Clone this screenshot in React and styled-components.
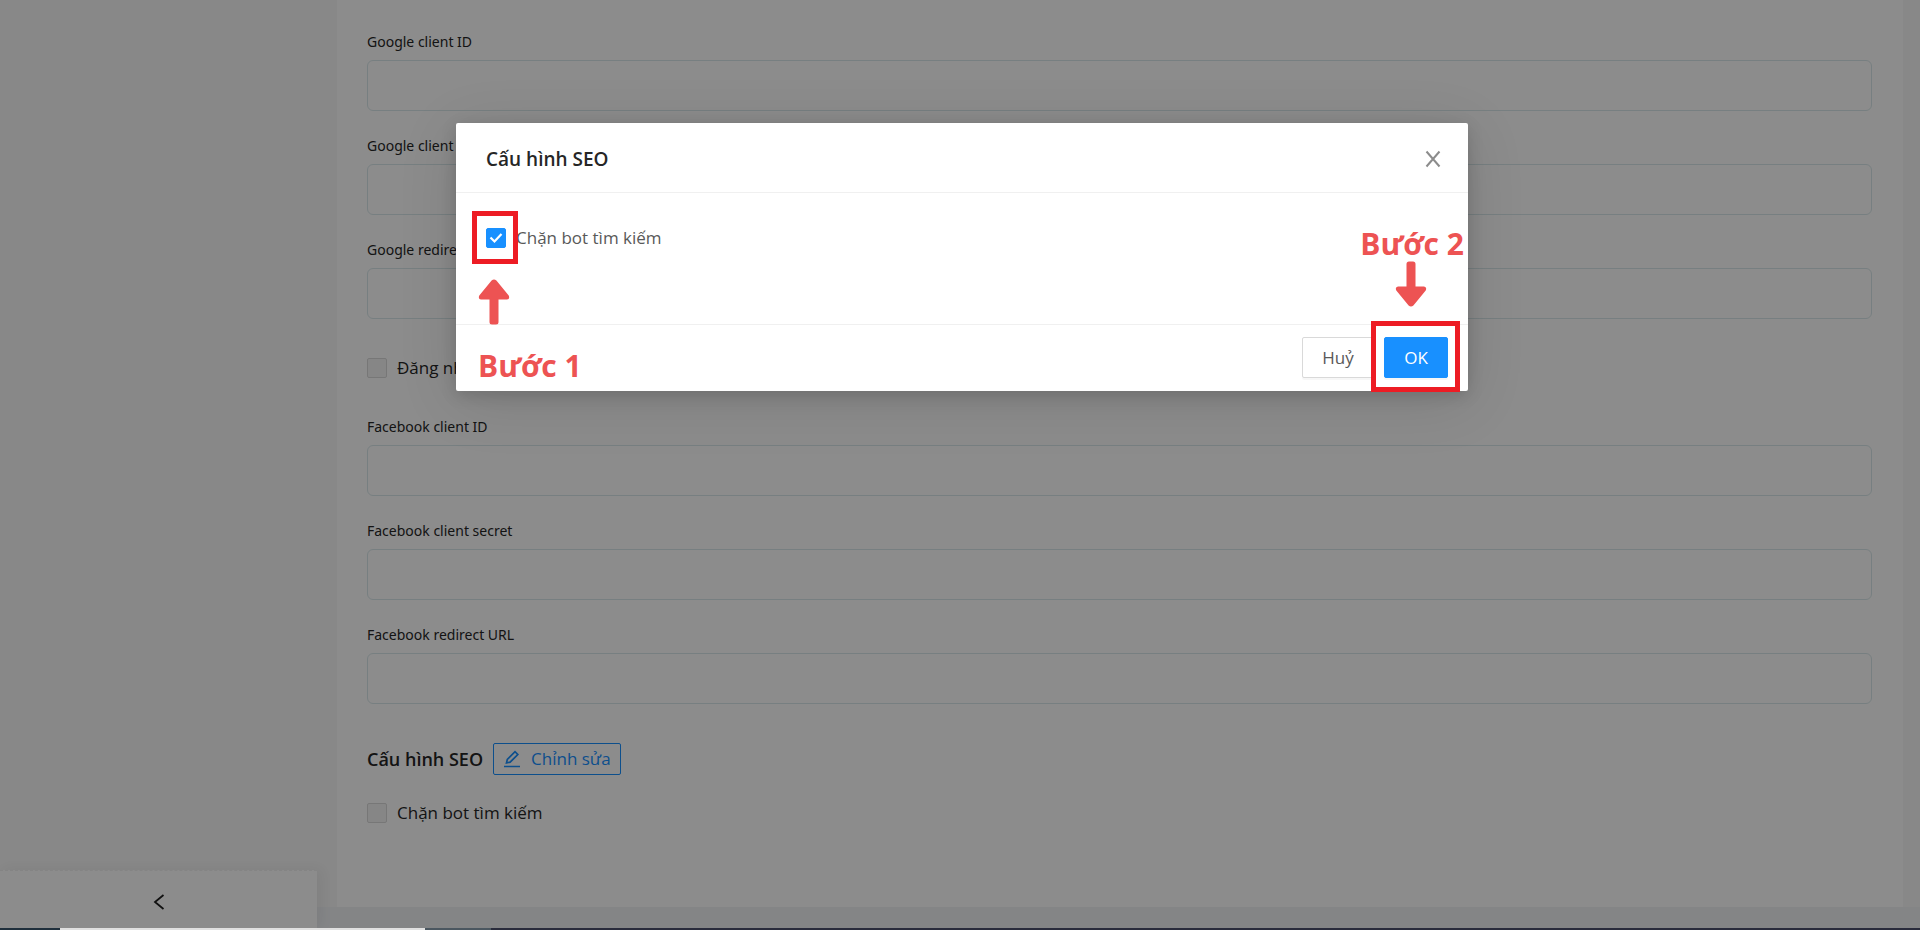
import React from "react";
import styled, { createGlobalStyle } from "styled-components";

const Global = createGlobalStyle`
  * { box-sizing: border-box; }
  body { margin: 0; background: #f0f2f5; color: #262626; font-family: "Open Sans", "Noto Sans", sans-serif; font-size: 17px; line-height: 28px; }
  button, input { font: inherit; }
`;
const Page = styled.div`position: relative; display: flex; flex-direction: column; min-height: 100vh;`;
const Body = styled.div`display: flex; flex: 1;`;
const Sidebar = styled.aside`position: relative; display: flex; flex-direction: column; justify-content: flex-end; width: 317px; flex: none; background: #f7f7f7;`;
const Collapse = styled.button`display: grid; place-items: center; height: 58px; padding: 4px 0 0; border: 0; border-top: 1px dashed #f0f0f0; background: #fff; box-shadow: 4px 0 12px rgba(0,0,0,.06);`;
const Main = styled.main`flex: 1; display: flex; flex-direction: column; min-width: 0; padding-bottom: 21px;`;
const Gutter = styled.div`flex: 1; padding: 0 17px 0 20px; background: #f7f7f7;`;
const Card = styled.form`height: 100%; padding: 28px 31px 60px 30px; background: #fff;`;
const Field = styled.label`display: block; margin-bottom: 21px; font-family: "Noto Sans", sans-serif; font-size: 14px; line-height: 28px;`;
const TextBox = styled.input`display: block; width: 100%; height: 51px; margin-top: 4px; border: 1px solid #d9e8eb; border-radius: 6px; background: #fff; outline: none;`;
const CheckRow = styled.label`display: flex; align-items: center; gap: 10px; margin: ${p => p.$margin || "0"}; color: ${p => p.$color || "inherit"};`;
const Check = styled.input`appearance: none; flex: none; width: 20px; height: 20px; margin: 0; border: 1px solid #d9d9d9; border-radius: 2px; background: #f5f5f5;
  &:checked { border-color: #1890ff; background-color: #1890ff; }`;
const CheckBox = styled.span`display: grid; & > * { grid-area: 1 / 1; place-self: center; } svg { pointer-events: none; }`;
const SeoHead = styled.div`display: flex; align-items: center; gap: 10px; margin: 39px 0 24px;`;
const SeoTitle = styled.h2`margin: 0; font-size: 18px; font-weight: 600;`;
const EditButton = styled.button`display: flex; align-items: center; gap: 10px; height: 32px; padding: 0 9px; border: 1px solid #1890ff; border-radius: 2px; background: #fff; color: #1890ff;`;
const Mask = styled.div`position: absolute; inset: 0 0 2px; display: flex; justify-content: center; align-items: flex-start; padding: 123px 0 0 4px; background: rgba(0,0,0,.45);`;
const Modal = styled.section`position: relative; width: 1012px; max-width: 100%; background: #fff; border-radius: 2px; box-shadow: 0 4px 16px rgba(0,0,0,.15), 0 10px 60px rgba(0,0,0,.12);`;
const ModalHead = styled.header`display: flex; align-items: center; justify-content: space-between; height: 70px; padding: 2px 26px 0 30px; border-bottom: 1px solid #f0f0f0;`;
const ModalTitle = styled.h1`margin: 0; font-size: 19px; font-weight: 600;`;
const Close = styled.button`display: grid; place-items: center; padding: 0; border: 0; background: none; color: #8c8c8c;`;
const ModalBody = styled.div`height: 132px; padding: 31px 30px; border-bottom: 1px solid #f0f0f0;`;
const ModalFoot = styled.footer`display: flex; justify-content: flex-end; gap: 10px; padding: 12px 20px 13px;`;
const Action = styled.button`height: 41px; width: ${p => p.$primary ? 64 : 72}px; padding: 0; border: 1px solid ${p => p.$primary ? "#1890ff" : "#d9d9d9"}; border-radius: 2px; background: ${p => p.$primary ? "#1890ff" : "#fff"}; color: ${p => p.$primary ? "#fff" : "#595959"}; box-shadow: 0 2px 0 rgba(0,0,0,.03);`;
const Frame = styled.div`position: absolute; left: ${p => p.$x}px; right: ${p => p.$right}px; top: ${p => p.$y}px; width: ${p => p.$w}px; height: ${p => p.$h}px; border: 5px solid #ed1c24; pointer-events: none;`;
const Step = styled.strong`position: absolute; left: ${p => p.$x}px; right: ${p => p.$right}px; top: ${p => p.$y}px; color: #ed5353; font-size: 30px; line-height: 40px; white-space: nowrap;`;
const ArrowIcon = styled.svg`position: absolute; left: ${p => p.$x}px; right: ${p => p.$right}px; top: ${p => p.$y}px;`;
const Taskbar = styled.div`position: relative; display: flex; height: 2px; background: #2a2c3c;`;
const TaskPart = styled.span`width: ${p => p.$w}px; background: ${p => p.$c};`;

const TextField = ({ label }) => <Field>{label}<TextBox type="text" /></Field>;
const Arrow = ({ down, ...place }) => (
  <ArrowIcon width="32" height="46" viewBox="0 0 32 46" fill="#ed5353" {...place}>
    <path transform={down ? "rotate(180 16 23)" : undefined} d="M13.6 1.4Q16 -.6 18.4 1.4L30.7 16.5Q32.2 20 29 20.5H20.5V43Q20.5 45.5 18 45.5H14Q11.5 45.5 11.5 43V20.5H3Q-.2 20 1.3 16.5Z" />
  </ArrowIcon>
);

export default function App() {
  return (
    <Page>
      <Global />
      <Body>
        <Sidebar>
          <Collapse aria-label="Thu gọn">
            <svg width="12" height="16" viewBox="0 0 12 16" fill="none" stroke="#1f1f1f" strokeWidth="1.8"><path d="M10.5 1L2 8L10.5 15" /></svg>
          </Collapse>
        </Sidebar>
        <Main>
          <Gutter>
            <Card>
              <TextField label="Google client ID" />
              <TextField label="Google client secret" />
              <TextField label="Google redirect URL" />
              <CheckRow $margin="35px 0 31px"><Check type="checkbox" />Đăng nhập</CheckRow>
              <TextField label="Facebook client ID" />
              <TextField label="Facebook client secret" />
              <TextField label="Facebook redirect URL" />
              <SeoHead>
                <SeoTitle>Cấu hình SEO</SeoTitle>
                <EditButton type="button">
                  <svg width="18" height="18" viewBox="0 0 18 18" fill="none" stroke="currentColor" strokeWidth="1.7"><path d="M1 16.5H17M3.5 13L4.3 9.4L12 1.7L14.8 4.5L7.1 12.2Z" /></svg>
                  Chỉnh sửa
                </EditButton>
              </SeoHead>
              <CheckRow><Check type="checkbox" />Chặn bot tìm kiếm</CheckRow>
            </Card>
          </Gutter>
        </Main>
      </Body>
      <Mask>
        <Modal role="dialog" aria-label="Cấu hình SEO">
          <ModalHead>
            <ModalTitle>Cấu hình SEO</ModalTitle>
            <Close aria-label="Đóng"><svg width="18" height="18" viewBox="0 0 18 18" fill="none" stroke="currentColor" strokeWidth="2"><path d="M2.5 1.5L15.5 16.5M15.5 1.5L2.5 16.5" /></svg></Close>
          </ModalHead>
          <ModalBody>
            <CheckRow $color="#595959">
              <CheckBox>
                <Check type="checkbox" defaultChecked />
                <svg width="14" height="12" viewBox="0 0 14 12" fill="none" stroke="#fff" strokeWidth="2.2"><path d="M1.5 5.5L5.5 9.5L12.5 2" /></svg>
              </CheckBox>
              Chặn bot tìm kiếm
            </CheckRow>
          </ModalBody>
          <ModalFoot>
            <Action>Huỷ</Action>
            <Action $primary>OK</Action>
          </ModalFoot>
          <Frame $x={16} $y={88} $w={46} $h={53} />
          <Arrow $x={22} $y={156} />
          <Step $x={22} $y={223}>Bước 1</Step>
          <Step $right={4} $y={101}>Bước 2</Step>
          <Arrow down $right={41} $y={138} />
          <Frame $right={8} $y={198} $w={89} $h={71} />
        </Modal>
      </Mask>
      <Taskbar><TaskPart $w={60} $c="#1f2f3c" /><TaskPart $w={365} $c="#e0e0e0" /><TaskPart $w={66} $c="#4b5760" /></Taskbar>
    </Page>
  );
}
